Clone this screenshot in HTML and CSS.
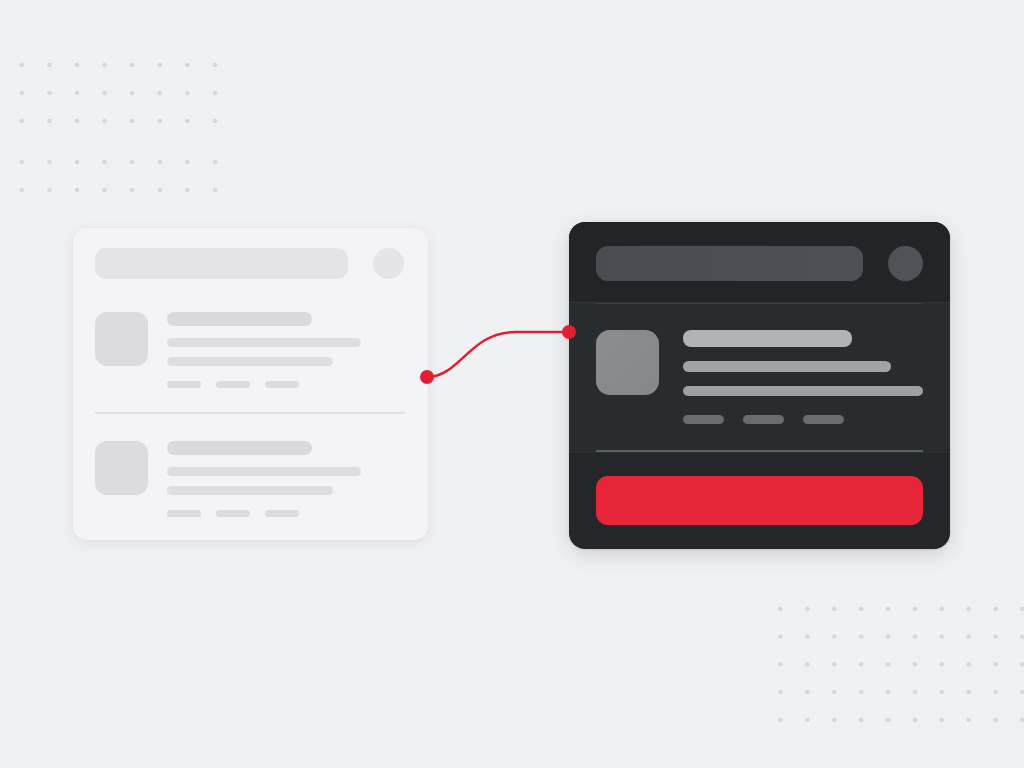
FILE: index.html
```html
<!DOCTYPE html>
<html lang="en">
<head>
<meta charset="utf-8">
<title>Skeleton cards</title>
<link rel="stylesheet" href="styles.css">
</head>
<body>
<main class="canvas">
  <div class="dots dots-a"></div>
  <div class="dots dots-b"></div>
  <div class="dots dots-c"></div>

  <section class="card light-card">
    <div class="lc-head">
      <div class="lc-bar"></div>
      <div class="lc-avatar"></div>
    </div>
    <div class="lc-item">
      <div class="lc-thumb"></div>
      <div class="lc-text">
        <div class="lc-title"></div>
        <div class="lc-line lc-line-a"></div>
        <div class="lc-line lc-line-b"></div>
        <div class="lc-tags"><span class="lc-tag"></span><span class="lc-tag"></span><span class="lc-tag"></span></div>
      </div>
    </div>
    <div class="lc-divider"></div>
    <div class="lc-item lc-item-2">
      <div class="lc-thumb"></div>
      <div class="lc-text">
        <div class="lc-title"></div>
        <div class="lc-line lc-line-a"></div>
        <div class="lc-line lc-line-b"></div>
        <div class="lc-tags"><span class="lc-tag"></span><span class="lc-tag"></span><span class="lc-tag"></span></div>
      </div>
    </div>
  </section>

  <section class="card dark-card">
    <div class="dk-head">
      <div class="dk-bar"></div>
      <div class="dk-avatar"></div>
    </div>
    <div class="dk-mid">
      <div class="dk-rule dk-rule-top"></div>
      <div class="dk-item">
        <div class="dk-thumb"></div>
        <div class="dk-text">
          <div class="dk-title"></div>
          <div class="dk-line dk-line-a"></div>
          <div class="dk-line dk-line-b"></div>
          <div class="dk-tags"><span class="dk-tag"></span><span class="dk-tag"></span><span class="dk-tag"></span></div>
        </div>
      </div>
      <div class="dk-rule dk-rule-bottom"></div>
    </div>
    <div class="dk-foot">
      <div class="dk-button"></div>
    </div>
  </section>

  <svg class="connector" width="1024" height="768" viewBox="0 0 1024 768" aria-hidden="true">
    <path d="M427 377 C 460 377, 470 332, 515 332 L 569 332" fill="none" stroke="#e01f30" stroke-width="2.5" stroke-linecap="round"/>
    <circle cx="427" cy="377" r="7" fill="#e31e30"/>
    <circle cx="569" cy="332" r="7" fill="#e31e30"/>
  </svg>
</main>
</body>
</html>
```

FILE: styles.css
```css
html, body {
  margin: 0;
  padding: 0;
}
body {
  width: 1024px;
  height: 768px;
  overflow: hidden;
  background: #f0f1f3;
  font-family: "Liberation Sans", Arial, sans-serif;
}
.canvas {
  position: relative;
  width: 1024px;
  height: 768px;
  overflow: hidden;
}

/* dot grids */
.dots {
  position: absolute;
  background-image: radial-gradient(circle, #d6d7da 1.9px, rgba(214,215,218,0) 2.7px);
}
.dots-a {
  left: 8.2px;
  top: 51px;
  width: 221px;
  height: 84px;
  background-size: 27.6px 28px;
}
.dots-b {
  left: 8.2px;
  top: 148px;
  width: 221px;
  height: 56px;
  background-size: 27.6px 28px;
}
.dots-c {
  left: 767px;
  top: 595px;
  width: 270px;
  height: 139px;
  background-size: 26.9px 27.75px;
}

.card {
  position: absolute;
  box-sizing: border-box;
  display: flex;
  flex-direction: column;
}

/* light card */
.light-card {
  left: 73px;
  top: 228px;
  width: 355px;
  height: 312px;
  padding: 20px 24px 23px 22px;
  background: #f4f4f6;
  border-radius: 14px;
  box-shadow: 0 3px 14px rgba(0, 0, 0, 0.07), 0 0 2px rgba(0, 0, 0, 0.03);
}
.lc-head {
  display: flex;
  align-items: center;
  gap: 25px;
  height: 31px;
}
.lc-bar {
  flex: 1;
  height: 31px;
  border-radius: 11px;
  background: #e4e4e6;
}
.lc-avatar {
  width: 31px;
  height: 31px;
  border-radius: 50%;
  background: #e5e5e7;
}
.lc-item {
  display: flex;
  gap: 19px;
  margin-top: 33px;
}
.lc-item-2 {
  margin-top: 27px;
}
.lc-thumb {
  width: 53px;
  height: 54px;
  border-radius: 12px;
  background: #dcdcde;
}
.lc-text {
  display: flex;
  flex-direction: column;
}
.lc-title {
  width: 145px;
  height: 14px;
  border-radius: 7px;
  background: #dadadc;
}
.lc-line {
  height: 9px;
  border-radius: 5px;
  background: #dedee0;
}
.lc-line-a {
  width: 194px;
  margin-top: 12px;
}
.lc-line-b {
  width: 166px;
  margin-top: 10px;
}
.lc-tags {
  display: flex;
  gap: 15px;
  margin-top: 15px;
}
.lc-tag {
  width: 34px;
  height: 7px;
  border-radius: 4px;
  background: #dcdcde;
}
.lc-divider {
  height: 2px;
  margin-top: 24px;
  margin-right: -1px;
  background: #e0e0e3;
}

/* dark card */
.dark-card {
  left: 569px;
  top: 222px;
  width: 381px;
  height: 327px;
  overflow: hidden;
  background: #252629;
  border-radius: 16px;
  box-shadow: 0 6px 22px rgba(0, 0, 0, 0.13), 0 1px 3px rgba(0, 0, 0, 0.1);
}
.dk-head {
  display: flex;
  align-items: center;
  gap: 25px;
  padding: 24px 27px 21px;
  background: #232427;
}
.dk-bar {
  flex: 1;
  height: 35px;
  border-radius: 12px;
  background: linear-gradient(90deg, #4a4c51, #4d5055);
}
.dk-avatar {
  width: 35px;
  height: 35px;
  border-radius: 50%;
  background: #4f5256;
}
.dk-mid {
  display: flex;
  flex-direction: column;
  background: #2a2b2e;
  border-top: 1px solid #333438;
  border-bottom: 1px solid #2f3033;
}
.dk-rule {
  margin: 0 27px;
}
.dk-rule-top {
  height: 1px;
  background: #3d3e42;
}
.dk-rule-bottom {
  height: 2px;
  background: #5d5e62;
}
.dk-item {
  display: flex;
  gap: 24px;
  padding: 26px 27px;
}
.dk-thumb {
  width: 63px;
  height: 65px;
  border-radius: 14px;
  background: linear-gradient(135deg, #8c8d91, #86878b);
}
.dk-text {
  display: flex;
  flex-direction: column;
}
.dk-title {
  width: 169px;
  height: 17px;
  border-radius: 8px;
  background: #b2b3b6;
}
.dk-line {
  border-radius: 6px;
  background: #a2a3a7;
}
.dk-line-a {
  width: 208px;
  height: 11px;
  margin-top: 14px;
}
.dk-line-b {
  width: 240px;
  height: 10px;
  margin-top: 14px;
  background: #9fa0a4;
}
.dk-tags {
  display: flex;
  gap: 19px;
  margin-top: 19px;
}
.dk-tag {
  width: 41px;
  height: 9px;
  border-radius: 5px;
  background: #6b6c70;
}
.dk-foot {
  padding: 23px 27px 24px;
}
.dk-button {
  height: 49px;
  border-radius: 12px;
  background: #e8263a;
}

.connector {
  position: absolute;
  left: 0;
  top: 0;
  pointer-events: none;
}
```
